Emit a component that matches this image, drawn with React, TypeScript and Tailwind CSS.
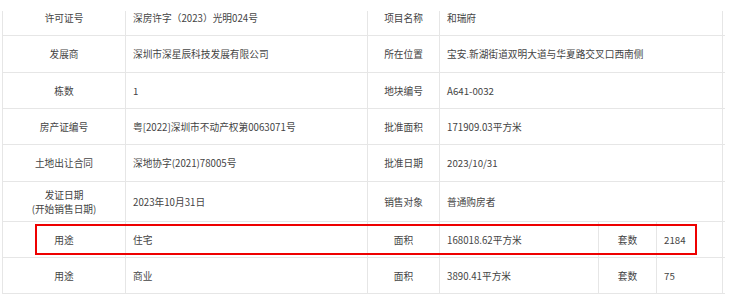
import React from "react";

type Cell = { text: React.ReactNode; w: string; label?: boolean };

const rows: { h: string; cells: Cell[]; first?: boolean; boxed?: boolean }[] = [
    {
        h: "h-[36px]",
        first: true,
        cells: [
            { text: "许可证号", w: "w-[123px]", label: true },
            { text: "深房许字（2023）光明024号", w: "w-[242px]" },
            { text: "项目名称", w: "w-[72px]", label: true },
            { text: "和瑞府", w: "w-[284px]" },
        ],
    },
    {
        h: "h-[37px]",
        cells: [
            { text: "发展商", w: "w-[123px]", label: true },
            { text: "深圳市深星辰科技发展有限公司", w: "w-[242px]" },
            { text: "所在位置", w: "w-[72px]", label: true },
            { text: "宝安.新湖街道双明大道与华夏路交叉口西南侧", w: "w-[284px]" },
        ],
    },
    {
        h: "h-[36px]",
        cells: [
            { text: "栋数", w: "w-[123px]", label: true },
            { text: "1", w: "w-[242px]" },
            { text: "地块编号", w: "w-[72px]", label: true },
            { text: "A641-0032", w: "w-[284px]" },
        ],
    },
    {
        h: "h-[36px]",
        cells: [
            { text: "房产证编号", w: "w-[123px]", label: true },
            { text: "粤[2022]深圳市不动产权第0063071号", w: "w-[242px]" },
            { text: "批准面积", w: "w-[72px]", label: true },
            { text: "171909.03平方米", w: "w-[284px]" },
        ],
    },
    {
        h: "h-[37px]",
        cells: [
            { text: "土地出让合同", w: "w-[123px]", label: true },
            { text: "深地协字(2021)78005号", w: "w-[242px]" },
            { text: "批准日期", w: "w-[72px]", label: true },
            { text: "2023/10/31", w: "w-[284px]" },
        ],
    },
    {
        h: "h-[40px]",
        cells: [
            {
                text: (
                    <>
                        发证日期
                        <br />
                        (开始销售日期)
                    </>
                ),
                w: "w-[123px]",
                label: true,
            },
            { text: "2023年10月31日", w: "w-[242px]" },
            { text: "销售对象", w: "w-[72px]", label: true },
            { text: "普通购房者", w: "w-[284px]" },
        ],
    },
    {
        h: "h-[36px]",
        boxed: true,
        cells: [
            { text: "用途", w: "w-[123px]", label: true },
            { text: "住宅", w: "w-[242px]" },
            { text: "面积", w: "w-[72px]", label: true },
            { text: "168018.62平方米", w: "w-[159px]" },
            { text: "套数", w: "w-[58px]", label: true },
            { text: "2184", w: "w-[67px]" },
        ],
    },
    {
        h: "h-[36px]",
        cells: [
            { text: "用途", w: "w-[123px]", label: true },
            { text: "商业", w: "w-[242px]" },
            { text: "面积", w: "w-[72px]", label: true },
            { text: "3890.41平方米", w: "w-[159px]" },
            { text: "套数", w: "w-[58px]", label: true },
            { text: "75", w: "w-[67px]" },
        ],
    },
];

const App = () => {
    return (
        <div className="w-[740px] h-[294px] bg-white overflow-hidden font-['Noto_Sans_CJK_SC','Noto_Sans',sans-serif] text-[9.7px] leading-[14px] text-[#444]">
            <div className="ml-[2px] w-[723px] flex flex-col">
                {rows.map((row, i) => (
                    <div key={i} className={`relative flex border-b border-[#e6e6e6] ${row.h}`}>
                        {row.cells.map((cell, j) => {
                            const last = j === row.cells.length - 1;
                            return (
                                <div
                                    key={j}
                                    className={`flex items-center border-l border-[#e6e6e6] ${cell.w} ${
                                        last ? "border-r" : ""
                                    } ${cell.label ? "justify-center text-center" : "pl-[7px]"} ${
                                        row.first
                                            ? "[border-image:linear-gradient(to_bottom,#fff_11px,#e6e6e6_11px)_1]"
                                            : ""
                                    }`}
                                >
                                    <span>{cell.text}</span>
                                </div>
                            );
                        })}
                        {row.boxed && (
                            <div className="absolute left-[33px] top-[2px] w-[662px] h-[31px] border-2 border-[#ee0000] pointer-events-none" />
                        )}
                    </div>
                ))}
            </div>
        </div>
    );
};

export default App;
